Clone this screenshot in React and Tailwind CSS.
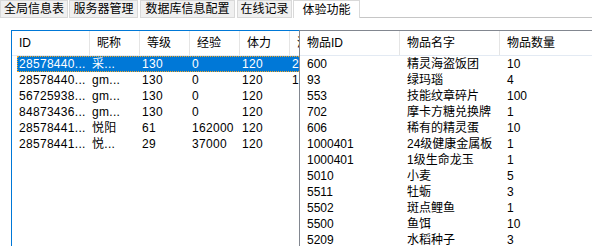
import React from "react";

const tabs = [
  { label: "全局信息表", w: "w-[68px]", ml: "ml-0" },
  { label: "服务器管理", w: "w-[69px]", ml: "ml-[1px]" },
  { label: "数据库信息配置", w: "w-[95px]", ml: "ml-[2px]" },
  { label: "在线记录", w: "w-[55px]", ml: "ml-[2px]" },
];

const players = [
  ["28578440...", "采...", "130", "0", "120", "2"],
  ["28578440...", "gm...", "130", "0", "120", "1"],
  ["56725938...", "gm...", "130", "0", "120", ""],
  ["84873436...", "gm...", "130", "0", "120", ""],
  ["28578441...", "悦阳", "61", "162000", "120", ""],
  ["28578441...", "悦...", "29", "37000", "120", ""],
];

const items = [
  ["600", "精灵海盗饭团", "10"],
  ["93", "绿玛瑙", "4"],
  ["553", "技能纹章碎片", "100"],
  ["702", "摩卡方糖兑换牌", "1"],
  ["606", "稀有的精灵蛋", "10"],
  ["1000401", "24级健康金属板", "1"],
  ["1000401", "1级生命龙玉", "1"],
  ["5010", "小麦", "5"],
  ["5511", "牡蛎", "3"],
  ["5502", "斑点鲤鱼", "1"],
  ["5500", "鱼饵", "10"],
  ["5209", "水稻种子", "3"],
];

const leftCols = ["w-[78px]", "w-[50px]", "w-[50px]", "w-[50px]", "w-[50px]", "w-[50px]"];
const leftHead = ["ID", "昵称", "等级", "经验", "体力", "清"];

function App() {
  return (
    <div className="w-[592px] h-[246px] bg-white overflow-hidden text-[12px] text-black font-['Liberation_Sans','Noto_Sans_CJK_SC',sans-serif]">
      {/* tab strip */}
      <div className="flex h-[18px]">
        {tabs.map((t) => (
          <div
            key={t.label}
            className={`${t.w} ${t.ml} h-[18px] bg-[#f0f0f0] border border-[#d9d9d9] flex items-center justify-center leading-none`}
          >
            {t.label}
          </div>
        ))}
        <div className="w-[67px] h-[18px] bg-white border border-b-0 border-[#d9d9d9] flex items-center justify-center leading-none ml-[1px]">
          体验功能
        </div>
        <div className="flex-1 h-[18px] border-b border-[#c6c6c6]" />
      </div>

      <div className="flex pt-[12px] pl-[11px] h-[228px]">
        {/* players list */}
        <div className="w-[288px] h-full border-l border-t border-[#0078d7] overflow-hidden">
          <div className="flex h-[25px] border-b border-[#e3eaf3] w-[400px]">
            {leftHead.map((h, i) => (
              <div
                key={h}
                className={`${leftCols[i]} h-full flex items-center pl-[7px] border-r border-[#e5e5e5]`}
              >
                {h}
              </div>
            ))}
          </div>
          {players.map((row, r) => (
            <div
              key={r}
              className={`flex h-[16px] items-center w-[400px] ml-[5px] ${
                r === 0 ? "bg-[#0078d7] text-white outline outline-1 outline-dotted outline-[#f5a623] -outline-offset-1" : ""
              }`}
            >
              {row.map((c, i) => (
                <div
                  key={i}
                  className={`${i === 0 ? "w-[73px]" : leftCols[i]} pl-[2px] whitespace-nowrap leading-none tracking-[0.3px]`}
                >
                  {c}
                </div>
              ))}
            </div>
          ))}
        </div>

        {/* items list */}
        <div className="flex-1 h-full border-l border-t border-[#828790] overflow-hidden">
          <div className="flex h-[25px] border-b border-[#e3eaf3]">
            {["物品ID", "物品名字", "物品数量"].map((h, i) => (
              <div
                key={h}
                className={`${i < 2 ? "w-[100px] border-r border-[#e5e5e5]" : "flex-1"} h-full flex items-center pl-[7px]`}
              >
                {h}
              </div>
            ))}
          </div>
          {items.map((row, r) => (
            <div key={r} className="flex h-[16px] items-center">
              <div className="w-[100px] pl-[7px] leading-none">{row[0]}</div>
              <div className="w-[100px] pl-[7px] leading-none whitespace-nowrap">{row[1]}</div>
              <div className="flex-1 pl-[7px] leading-none">{row[2]}</div>
            </div>
          ))}
        </div>
      </div>
    </div>
  );
}

export default App;
